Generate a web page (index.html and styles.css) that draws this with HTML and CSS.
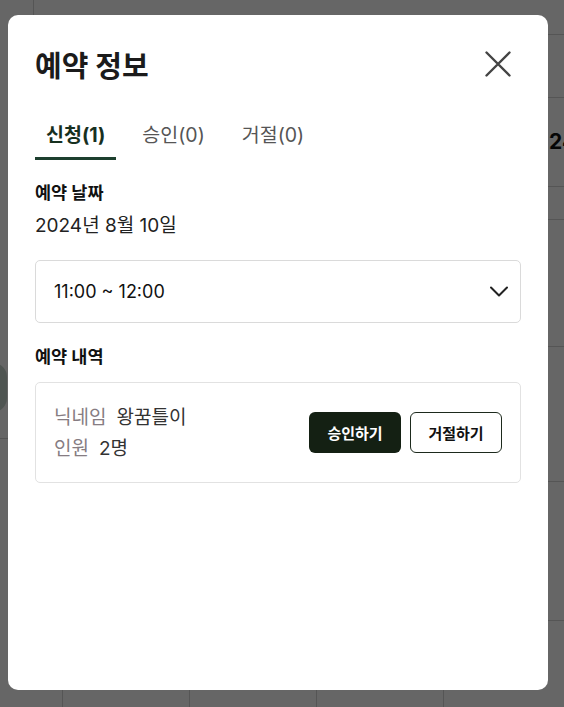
FILE: index.html
```html
<!DOCTYPE html>
<html>
<head>
  <title>예약 정보</title>
  <link rel="stylesheet" href="styles.css">
</head>
<body>
  <div class="bg">
    <div class="bg-side">
      <div class="side-top"></div>
      <div class="side-fab"></div>
      <div class="side-rule"></div>
    </div>
    <div class="bg-main">
      <div class="bg-row r1"></div>
      <div class="bg-row r2"></div>
      <div class="bg-row r3"><span class="day-num">24</span></div>
      <div class="bg-row r4"></div>
      <div class="bg-row r5"></div>
      <div class="bg-row r6"></div>
      <div class="bg-row r7"></div>
      <div class="bg-cols">
        <div class="bg-col"></div>
        <div class="bg-col"></div>
        <div class="bg-col"></div>
        <div class="bg-col"></div>
      </div>
    </div>
  </div>

  <div class="overlay">
    <div class="modal">
      <div class="modal-header">
        <h2>예약 정보</h2>
        <button class="close" aria-label="닫기">
          <svg width="26" height="26" viewBox="0 0 26 26">
            <path d="M1.5 1.5 L24.5 24.5 M24.5 1.5 L1.5 24.5" stroke="#444" stroke-width="2.4" stroke-linecap="round" fill="none"/>
          </svg>
        </button>
      </div>

      <div class="tabs">
        <button class="tab active">신청(1)</button>
        <button class="tab">승인(0)</button>
        <button class="tab">거절(0)</button>
      </div>

      <h3 class="label">예약 날짜</h3>
      <p class="date">2024년 8월 10일</p>

      <div class="select">
        <span>11:00 ~ 12:00</span>
        <svg width="18" height="11" viewBox="0 0 18 11">
          <path d="M1 1.5 L9 9.5 L17 1.5" stroke="#222" stroke-width="2" fill="none" stroke-linecap="round" stroke-linejoin="round"/>
        </svg>
      </div>

      <h3 class="label label-list">예약 내역</h3>
      <div class="card">
        <div class="info">
          <div class="info-row"><span class="key">닉네임</span><span class="val">왕꿈틀이</span></div>
          <div class="info-row"><span class="key">인원</span><span class="val">2명</span></div>
        </div>
        <div class="actions">
          <button class="btn approve">승인하기</button>
          <button class="btn reject">거절하기</button>
        </div>
      </div>
    </div>
  </div>
</body>
</html>
```

FILE: styles.css
```css
* {
  box-sizing: border-box;
}

body {
  margin: 0;
  height: 100vh;
  overflow: hidden;
  font-family: "Inter", "Noto Sans CJK KR", sans-serif;
  background: #fff;
}

/* page behind the dialog */
.bg {
  display: flex;
  height: 100vh;
}

.bg-side {
  flex-shrink: 0;
  width: 62px;
  display: flex;
  flex-direction: column;
}

.side-top {
  width: 34px;
  height: 35px;
  border-right: 1px solid #d4d4d4;
}

.side-fab {
  margin-top: 328px;
  margin-left: -40px;
  width: 47px;
  height: 49px;
  border-radius: 14px;
  background: #c6d4cd;
}

.side-rule {
  height: 27px;
  border-bottom: 1px solid #d4d4d4;
}

.bg-main {
  flex: 1;
  min-width: 0;
  overflow: hidden;
  display: flex;
  flex-direction: column;
}

.bg-row {
  flex-shrink: 0;
  border-bottom: 1px solid #d4d4d4;
}

.r1 { height: 35px; }
.r2 { height: 63px; }
.r3 { height: 89px; display: flex; align-items: center; white-space: nowrap; }
.r4 { height: 33px; }
.r5 { height: 127px; }
.r6 { height: 135px; }
.r7 { height: 139px; }

.day-num {
  padding-left: 487px;
  padding-bottom: 2px;
  font-size: 21px;
  font-weight: 700;
  color: #111;
}

.bg-cols {
  flex: 1;
  display: grid;
  grid-template-columns: repeat(4, 127px);
}

.bg-col {
  border-left: 1px solid #d4d4d4;
}

/* dialog */
.overlay {
  position: fixed;
  inset: 0;
  background: rgba(0, 0, 0, 0.6);
  padding: 15px 16px 17px 8px;
}

.modal {
  width: 540px;
  height: 675px;
  background: #fff;
  border-radius: 10px;
  padding: 25px 27px;
}

.modal-header {
  display: flex;
  justify-content: space-between;
  align-items: center;
  height: 48px;
}

.modal-header h2 {
  margin: 0;
  font-size: 29px;
  font-weight: 700;
  color: #1b1b1b;
}

.close {
  width: 36px;
  height: 36px;
  margin-right: 5px;
  padding: 0;
  border: none;
  background: none;
  display: flex;
  align-items: center;
  justify-content: center;
  cursor: pointer;
}

.tabs {
  display: flex;
  gap: 15px;
  margin-top: 25px;
}

.tab {
  padding: 9px 11px 9px;
  font-family: inherit;
  font-size: 19.5px;
  line-height: 26px;
  color: #555;
  background: none;
  border: none;
  border-bottom: 3px solid transparent;
  cursor: pointer;
}

.tab.active {
  font-weight: 700;
  color: #17301f;
  border-bottom-color: #1d3f2e;
}

.label {
  margin: 21px 0 0;
  font-size: 17.5px;
  line-height: 24px;
  font-weight: 700;
  color: #111;
}

.label-list {
  margin-top: 22px;
}

.date {
  margin: 8px 0 0;
  font-size: 19px;
  line-height: 26px;
  color: #222;
}

.select {
  margin-top: 21px;
  height: 63px;
  border: 1px solid #dadada;
  border-radius: 5px;
  padding: 0 12px 0 18px;
  display: flex;
  align-items: center;
  justify-content: space-between;
  font-size: 18px;
  color: #111;
}

.card {
  margin-top: 13px;
  height: 101px;
  border: 1px solid #e2e2e2;
  border-radius: 5px;
  padding: 0 18px;
  display: flex;
  align-items: center;
  justify-content: space-between;
}

.info-row {
  font-size: 19px;
  line-height: 31px;
}

.key {
  color: #867c82;
  margin-right: 10px;
}

.val {
  color: #333;
}

.actions {
  display: flex;
  gap: 9px;
}

.btn {
  width: 92px;
  height: 41px;
  border-radius: 6px;
  font-family: inherit;
  font-size: 15px;
  font-weight: 700;
  cursor: pointer;
}

.approve {
  background: #142013;
  color: #fff;
  border: none;
}

.reject {
  background: #fff;
  color: #111;
  border: 1px solid #1d2a1d;
}
```
